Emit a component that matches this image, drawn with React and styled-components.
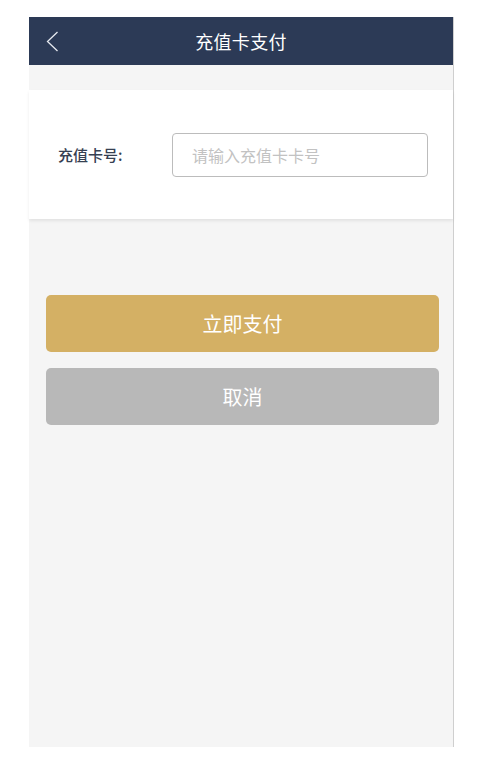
import styled, { createGlobalStyle } from "styled-components";

const GlobalStyle = createGlobalStyle`
  body {
    margin: 0;
    background: #ffffff;
    font-family: "Noto Sans CJK SC", "Noto Sans", sans-serif;
  }
`;

function App() {
  return (
    <>
      <GlobalStyle />
      <Screen>
        <Header>
          <BackButton aria-label="back">
            <svg width="13" height="21" viewBox="0 0 13 21">
              <path d="M11.5 1 L1.5 10.5 L11.5 20" fill="none" stroke="#e6e9ef" strokeWidth="1.3" />
            </svg>
          </BackButton>
          <Title>充值卡支付</Title>
        </Header>
        <Card>
          <Label>充值卡号:</Label>
          <Input placeholder="请输入充值卡卡号" />
        </Card>
        <Actions>
          <Button $bg="#d4b064">立即支付</Button>
          <Button $bg="#b8b8b8">取消</Button>
        </Actions>
      </Screen>
    </>
  );
}

export default App;

const Screen = styled.div`
  margin: 17px 0 0 29px;
  width: 424px;
  height: 730px;
  background-color: #f5f5f5;
  border-right: 1px solid #cfcfcf;
  display: flex;
  flex-direction: column;
`;

const Header = styled.div`
  height: 48px;
  background-color: #2c3a56;
  display: flex;
  align-items: center;
  justify-content: center;
  position: relative;
`;

const BackButton = styled.div`
  position: absolute;
  left: 17px;
  top: 14px;
  display: flex;
`;

const Title = styled.div`
  color: #ffffff;
  font-size: 18px;
  letter-spacing: 0.3px;
`;

const Card = styled.div`
  margin-top: 25px;
  height: 129px;
  background-color: #ffffff;
  box-shadow: 0 2px 3px rgba(0, 0, 0, 0.08);
  display: flex;
  align-items: center;
  padding: 0 25px 0 29px;
`;

const Label = styled.div`
  width: 114px;
  font-size: 15px;
  font-weight: 500;
  color: #364052;
`;

const Input = styled.input`
  flex: 1;
  height: 44px;
  box-sizing: border-box;
  border: 1px solid #bcbcbc;
  border-radius: 4px;
  padding: 0 19px;
  font-family: inherit;
  font-size: 16px;
  outline: none;
  &::placeholder {
    color: #c2c2c2;
  }
`;

const Actions = styled.div`
  margin-top: 76px;
  padding: 0 14px 0 17px;
  display: flex;
  flex-direction: column;
  gap: 16px;
`;

const Button = styled.div`
  height: 57px;
  border-radius: 5px;
  background-color: ${(p) => p.$bg};
  color: #ffffff;
  font-size: 20px;
  display: flex;
  align-items: center;
  justify-content: center;
`;
